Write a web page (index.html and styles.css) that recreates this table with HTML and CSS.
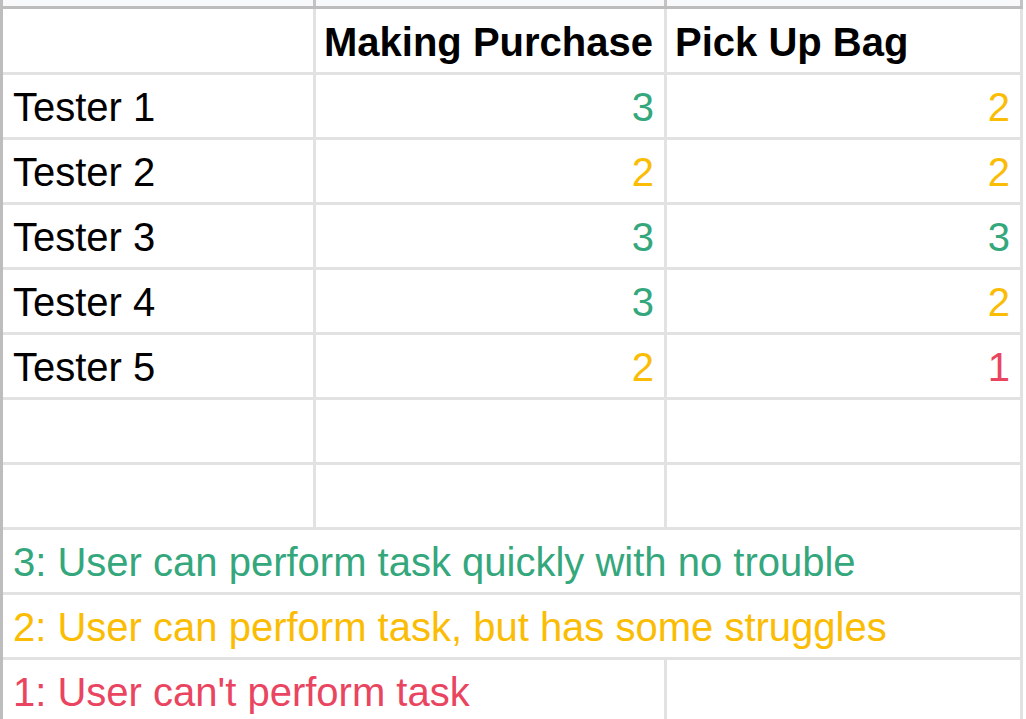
FILE: index.html
```html
<!DOCTYPE html>
<html>
<head>
<meta charset="utf-8">
<link rel="stylesheet" href="styles.css">
</head>
<body>
<div class="sheet">
  <div class="colbar">
    <div class="colhead a"></div>
    <div class="colhead b"></div>
    <div class="colhead c"></div>
  </div>
  <div class="grid">
    <div class="cell head"></div>
    <div class="cell head bold">Making Purchase</div>
    <div class="cell head bold">Pick Up Bag</div>

    <div class="cell">Tester 1</div>
    <div class="cell num s3">3</div>
    <div class="cell num s2">2</div>

    <div class="cell">Tester 2</div>
    <div class="cell num s2">2</div>
    <div class="cell num s2">2</div>

    <div class="cell">Tester 3</div>
    <div class="cell num s3">3</div>
    <div class="cell num s3">3</div>

    <div class="cell">Tester 4</div>
    <div class="cell num s3">3</div>
    <div class="cell num s2">2</div>

    <div class="cell">Tester 5</div>
    <div class="cell num s2">2</div>
    <div class="cell num s1">1</div>

    <div class="cell"></div>
    <div class="cell"></div>
    <div class="cell"></div>

    <div class="cell"></div>
    <div class="cell"></div>
    <div class="cell"></div>

    <div class="cell span3 s3">3: User can perform task quickly with no trouble</div>
    <div class="cell span3 s2">2: User can perform task, but has some struggles</div>
    <div class="cell span2 s1">1: User can't perform task</div>
    <div class="cell"></div>
  </div>
</div>
</body>
</html>
```
FILE: styles.css
```css
html, body {
  margin: 0;
  padding: 0;
  background: #ffffff;
  overflow: hidden;
  height: 719px;
}

.sheet {
  width: 1023px;
  border-left: 3px solid #bdbdbd;
  box-sizing: border-box;
  font-family: "Liberation Sans", Arial, sans-serif;
}

.colbar {
  display: grid;
  grid-template-columns: 310px 348px 353px;
  column-gap: 3px;
  padding-right: 3px;
  height: 6px;
  background: #c4c4c4;
  border-bottom: 3px solid #bdbdbd;
}

.colhead {
  background: #f8f9fa;
}

.grid {
  display: grid;
  grid-template-columns: 310px 348px 353px;
  grid-template-rows: 63px repeat(10, 62px);
  gap: 3px;
  padding-right: 3px;
  padding-bottom: 3px;
  background: #e2e2e2;
}

.cell {
  background: #ffffff;
  display: flex;
  align-items: flex-end;
  padding: 0 10px 6px 10px;
  font-size: 40px;
  line-height: 48px;
  color: #000000;
  white-space: nowrap;
  overflow: hidden;
  min-width: 0;
}

.head {
  padding-left: 8px;
}

.bold {
  font-weight: bold;
}

.num {
  justify-content: flex-end;
}

.span3 {
  grid-column: span 3;
}

.span2 {
  grid-column: span 2;
}

.s3 {
  color: #34a77c;
}

.s2 {
  color: #fbbc04;
}

.s1 {
  color: #ea4560;
}
```
